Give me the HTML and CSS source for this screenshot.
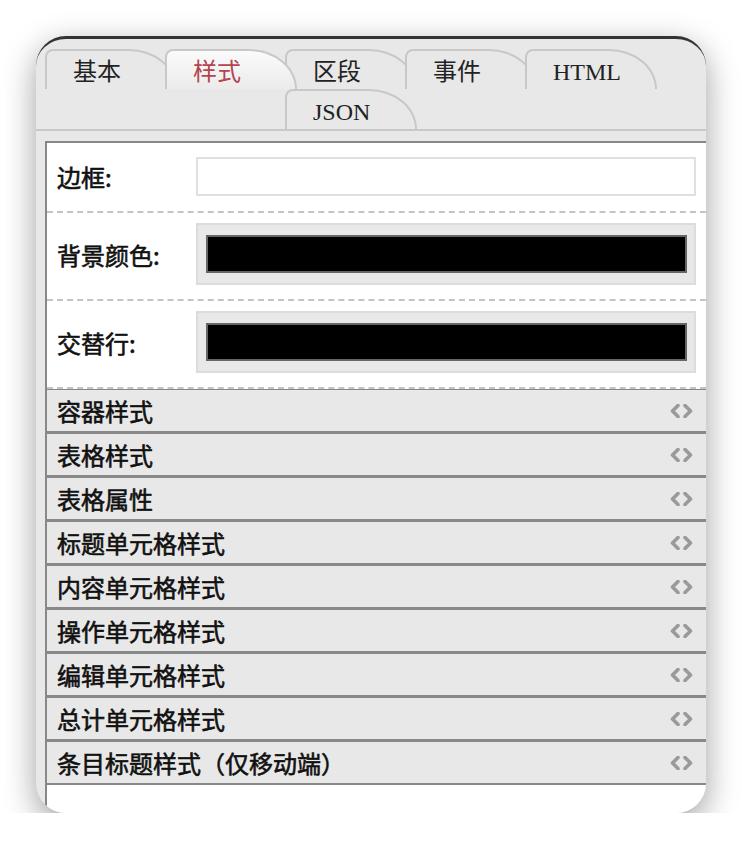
FILE: index.html
```html
<!DOCTYPE html>
<html lang="zh-CN">
<head>
<meta charset="utf-8">
<title>样式</title>
<link rel="stylesheet" href="styles.css">
</head>
<body>
<div class="card">
  <div class="tabs">
    <div class="tab">基本</div>
    <div class="tab active">样式</div>
    <div class="tab">区段</div>
    <div class="tab">事件</div>
    <div class="tab">HTML</div>
    <div class="tab">JSON</div>
  </div>
  <div class="tabs-rule"></div>
  <div class="panel">
    <div class="frow frow-input">
      <div class="flabel">边框:</div>
      <div class="finput"></div>
    </div>
    <div class="frow frow-color">
      <div class="flabel">背景颜色:</div>
      <div class="cbox"><div class="swatch"></div></div>
    </div>
    <div class="frow frow-color">
      <div class="flabel">交替行:</div>
      <div class="cbox"><div class="swatch"></div></div>
    </div>
    <div class="acc"><span>容器样式</span><svg class="chev" viewBox="0 0 26 14" width="26" height="14"><path d="M9 1.5 L3.5 7 L9 12.5 M16 1.5 L21.5 7 L16 12.5"/></svg></div>
    <div class="acc"><span>表格样式</span><svg class="chev" viewBox="0 0 26 14" width="26" height="14"><path d="M9 1.5 L3.5 7 L9 12.5 M16 1.5 L21.5 7 L16 12.5"/></svg></div>
    <div class="acc"><span>表格属性</span><svg class="chev" viewBox="0 0 26 14" width="26" height="14"><path d="M9 1.5 L3.5 7 L9 12.5 M16 1.5 L21.5 7 L16 12.5"/></svg></div>
    <div class="acc"><span>标题单元格样式</span><svg class="chev" viewBox="0 0 26 14" width="26" height="14"><path d="M9 1.5 L3.5 7 L9 12.5 M16 1.5 L21.5 7 L16 12.5"/></svg></div>
    <div class="acc"><span>内容单元格样式</span><svg class="chev" viewBox="0 0 26 14" width="26" height="14"><path d="M9 1.5 L3.5 7 L9 12.5 M16 1.5 L21.5 7 L16 12.5"/></svg></div>
    <div class="acc"><span>操作单元格样式</span><svg class="chev" viewBox="0 0 26 14" width="26" height="14"><path d="M9 1.5 L3.5 7 L9 12.5 M16 1.5 L21.5 7 L16 12.5"/></svg></div>
    <div class="acc"><span>编辑单元格样式</span><svg class="chev" viewBox="0 0 26 14" width="26" height="14"><path d="M9 1.5 L3.5 7 L9 12.5 M16 1.5 L21.5 7 L16 12.5"/></svg></div>
    <div class="acc"><span>总计单元格样式</span><svg class="chev" viewBox="0 0 26 14" width="26" height="14"><path d="M9 1.5 L3.5 7 L9 12.5 M16 1.5 L21.5 7 L16 12.5"/></svg></div>
    <div class="acc"><span>条目标题样式（仅移动端）</span><svg class="chev" viewBox="0 0 26 14" width="26" height="14"><path d="M9 1.5 L3.5 7 L9 12.5 M16 1.5 L21.5 7 L16 12.5"/></svg></div>
  </div>
</div>
</body>
</html>
```
FILE: styles.css
```css
html, body {
  margin: 0;
  padding: 0;
  background: #ffffff;
}
body {
  padding: 36px 0 0 36px;
  font-family: "Noto Sans CJK SC", sans-serif;
}
.card {
  width: 670px;
  height: 777px;
  box-sizing: border-box;
  background: #e8e8e8;
  border-top: 3px solid #333333;
  border-radius: 30px;
  overflow: hidden;
  box-shadow: 0 10px 32px rgba(0, 0, 0, 0.38);
  display: flex;
  flex-direction: column;
}
.tabs {
  width: 600px;
  padding: 10px 0 0 9px;
  display: flex;
  flex-wrap: wrap;
  justify-content: center;
}
.tab {
  position: relative;
  z-index: 1;
  width: 132px;
  height: 40px;
  margin-right: -12px;
  box-sizing: border-box;
  padding: 5px 0 0 26px;
  border: 2px solid #c8c8c8;
  border-bottom: none;
  border-radius: 8px 48px 0 0 / 8px 40px 0 0;
  background: #e8e8e8;
  color: #222222;
  font-family: "Liberation Serif", "Noto Sans CJK SC", serif;
  font-size: 24px;
  line-height: 33px;
  white-space: nowrap;
}
.tab.active {
  z-index: 2;
  color: #b5444f;
  background: linear-gradient(#fbfbfb, #ebebeb);
}
.tabs-rule {
  height: 2px;
  background: #c8c8c8;
}
.panel {
  flex: 1;
  margin: 10px 0 0 9px;
  background: #ffffff;
  border-top: 2px solid #888888;
  border-left: 2px solid #888888;
}
.frow {
  display: flex;
  align-items: center;
  border-bottom: 2px dashed #c4c4c4;
}
.frow-input {
  padding: 14px 10px 15px 10px;
}
.frow-color {
  padding: 10px 10px 14px 10px;
}
.flabel {
  width: 139px;
  flex: none;
  font-size: 24px;
  font-weight: 400;
  -webkit-text-stroke: 0.6px #111111;
  color: #111111;
}
.finput {
  flex: 1;
  height: 39px;
  box-sizing: border-box;
  border: 2px solid #e0e0e0;
  background: #ffffff;
}
.cbox {
  flex: 1;
  background: #e8e8e8;
  border: 2px solid #dcdcdc;
  padding: 10px 7px 10px 8px;
}
.swatch {
  height: 38px;
  box-sizing: border-box;
  background: #000000;
  border: 2px solid #666666;
}
.acc {
  height: 44px;
  box-sizing: border-box;
  display: flex;
  align-items: center;
  justify-content: space-between;
  padding: 0 11px 0 10px;
  background: #e8e8e8;
  border-top: 1px solid #888888;
  border-bottom: 2px solid #888888;
  font-size: 24px;
  font-weight: 400;
  -webkit-text-stroke: 0.6px #111111;
  color: #111111;
  white-space: nowrap;
}
.chev {
  flex: none;
  -webkit-text-stroke: 0;
}
.chev path {
  fill: none;
  stroke: #9a9a9a;
  stroke-width: 3.6;
  stroke-linecap: round;
  stroke-linejoin: round;
}
```
